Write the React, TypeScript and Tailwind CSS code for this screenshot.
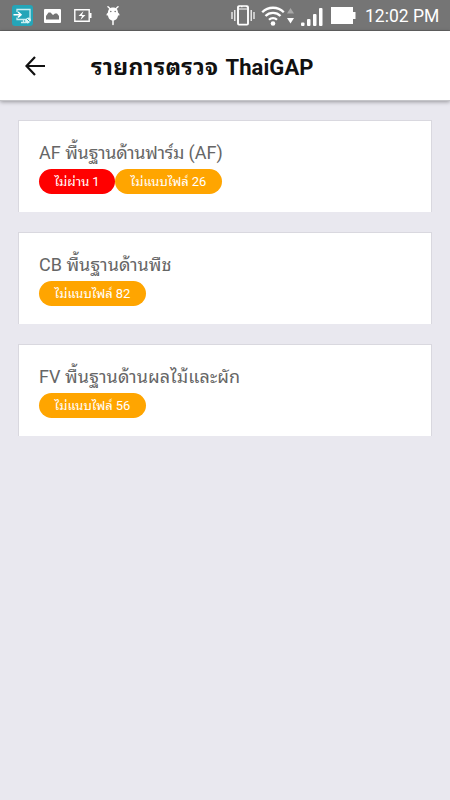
import React from 'react';

interface Badge {
  label: string;
  count: number;
  tone: 'fail' | 'missing';
}

interface ChecklistItem {
  code: string;
  title: string;
  tracking?: string;
  suffix?: string;
  badges: Badge[];
}

const items: ChecklistItem[] = [
  {
    code: 'AF',
    title: 'พื้นฐานด้านฟาร์ม',
    tracking: 'tracking-[-0.3px]',
    suffix: '(AF)',
    badges: [
      { label: 'ไม่ผ่าน', count: 1, tone: 'fail' },
      { label: 'ไม่แนบไฟล์', count: 26, tone: 'missing' }
    ]
  },
  {
    code: 'CB',
    title: 'พื้นฐานด้านพืช',
    badges: [{ label: 'ไม่แนบไฟล์', count: 82, tone: 'missing' }]
  },
  {
    code: 'FV',
    title: 'พื้นฐานด้านผลไม้และผัก',
    tracking: 'tracking-[0.1px]',
    badges: [{ label: 'ไม่แนบไฟล์', count: 56, tone: 'missing' }]
  }
];

const StatusBar: React.FC = () => (
  <div className="flex h-[31px] shrink-0 items-center border-b border-[#646464] bg-[#757575] text-white">
    {/* Notification icons */}
    <svg className="ml-3 h-[21px] w-[21px]" viewBox="0 0 21 21" fill="none">
      <rect width="21" height="21" rx="3" fill="#25a5b8" />
      <path d="M5 7V4.5h13v10H5v-2M9 17.5h5M11.5 14.5v3" stroke="#c9eef2" strokeWidth="1.3" />
      <path d="M1.5 9.7h7M6 7l3 2.7L6 12.4" stroke="#fff" strokeWidth="1.5" />
      <rect x="13" y="13" width="6" height="5" rx="2.5" transform="rotate(-40 16 15.5)" fill="#d8f4f6" />
      <path d="M15 14l2.5 2.5" stroke="#25a5b8" />
    </svg>
    <svg className="ml-[11px] mt-px h-[14px] w-[17px]" viewBox="0 0 17 14">
      <path
        fillRule="evenodd"
        fill="currentColor"
        d="M1 0h15a1 1 0 0 1 1 1v12a1 1 0 0 1-1 1H1a1 1 0 0 1-1-1V1a1 1 0 0 1 1-1ZM2 10.5h13V7l-2-2.5h-2L9 6 6.5 3.5h-2L2 7Z"
      />
    </svg>
    <svg className="ml-[13px] h-[13px] w-[18px]" viewBox="0 0 18 13" fill="none">
      <path d="M.8.8h14.4v11.4H.8z" stroke="currentColor" strokeWidth="1.4" />
      <path d="M15.5 4h2v5h-2z" fill="currentColor" />
      <path d="M9.5 2 4.5 7H8l-1.5 4 5-5H8z" fill="currentColor" />
    </svg>
    <svg className="ml-[14px] mt-[2px] h-[20px] w-[14px]" viewBox="0 0 14 20">
      <path d="M2 .8 4.5 3M12 .8 9.5 3M7 13v5.5" stroke="currentColor" strokeWidth="1.5" strokeLinecap="round" />
      <path
        d="M7 1.5C3.5 1.5 2 4 2 6.5L.6 8v1.5H2C2.2 12.5 4.5 14.5 7 14.5S11.8 12.5 12 9.5h1.400V8L12 6.500C12 4 10.500 1.500 7 1.500Z"
        fill="currentColor"
      />
      <circle cx="4.8" cy="5.5" r=".8" fill="#757575" />
      <circle cx="9.2" cy="5.5" r=".8" fill="#757575" />
    </svg>

    {/* System icons */}
    <svg className="ml-[111px] mt-px h-[21px] w-[24px]" viewBox="0 0 24 21" fill="none">
      <path d="M1 7v7M3.8 5v11M20.2 5v11M23 7v7" stroke="currentColor" strokeWidth="1.2" />
      <rect x="7" y="1.2" width="10" height="18.4" rx="1" stroke="currentColor" strokeWidth="1.9" />
      <path d="M8 4h8" stroke="currentColor" strokeWidth="1" />
      <path d="M8.5 2.3H10M11.5 2.3H15" stroke="#757575" strokeWidth="1" />
    </svg>
    <svg className="ml-[6px] mt-[2px] h-[20px] w-[24px]" viewBox="0 0 24 20" fill="none">
      <path
        d="M1.2 6.2a15.3 15.3 0 0 1 21.6 0M4.5 10a10.6 10.6 0 0 1 15 0M8 13.8a5.7 5.7 0 0 1 8 0"
        stroke="currentColor"
        strokeWidth="2.3"
      />
      <circle cx="12" cy="17.5" r="2.3" fill="currentColor" />
    </svg>
    <svg className="ml-[2px] mt-px h-[16px] w-[7px]" viewBox="0 0 7 16">
      <path d="M3.500 0 7 5.500H0z" fill="#a8a8a8" />
      <path d="M0 10h7l-3.500 5.500z" fill="currentColor" />
    </svg>
    <svg className="ml-[7px] mt-[3px] h-[18px] w-[22px]" viewBox="0 0 22 18" fill="currentColor">
      <rect y="14.5" width="3.5" height="3.5" rx="1" />
      <rect x="6" y="11" width="3.500" height="7" rx="1" />
      <rect x="12" y="6" width="3.500" height="12" rx="1" />
      <rect x="18" width="3.500" height="18" rx="1" />
    </svg>
    <svg className="ml-[8px] mt-px h-[17px] w-[25px]" viewBox="0 0 25 17" fill="currentColor">
      <path d="M0 0h22v5h2.500v7H22v5H0z" />
    </svg>
    <span className="ml-[9px] mt-[4px] whitespace-nowrap text-[17.5px] leading-none">12:02 PM</span>
  </div>
);

const Header: React.FC = () => (
  <header className="relative flex h-[70px] shrink-0 items-center border-b border-[#c4c4c8] bg-white shadow-[0_1px_4px_rgba(0,0,0,0.35)]">
    <svg className="ml-[25px] mt-px h-5 w-5" viewBox="0 0 20 20" fill="none" stroke="#111" strokeWidth="2.2">
      <path d="M20 10H1.5M10 1 1.5 10l8.500 9" />
    </svg>
    <h1 className="ml-[46px] mt-[3px] flex items-baseline gap-[7px] whitespace-nowrap text-[22px] font-bold leading-none text-[#111]">
      <span className="text-[23px] tracking-[0.3px]">รายการตรวจ</span>
      <span className="tracking-[0.1px]">ThaiGAP</span>
    </h1>
  </header>
);

const ChecklistCard: React.FC<{ item: ChecklistItem }> = ({ item }) => (
  <section className="h-[92px] border-x border-t border-[#d9d8df] bg-white pl-5 pt-[19px]">
    <h2 className="h-[29px] whitespace-nowrap text-[18px] leading-[26px] text-[#666]">
      {item.code} <span className={item.tracking}>{item.title}</span> {item.suffix}
    </h2>
    <div className="flex">
      {item.badges.map((badge) => (
        <span
          key={badge.label}
          className={`flex h-[25px] items-center justify-center gap-[3px] whitespace-nowrap rounded-full text-[13px] leading-none text-white ${
            badge.tone === 'fail' ? 'w-[76px] bg-[#ff0000]' : 'w-[107px] bg-[#ffa500]'
          }`}
        >
          <span>{badge.label}</span>
          <span>{badge.count}</span>
        </span>
      ))}
    </div>
  </section>
);

export default function App() {
  return (
    <div className="flex h-screen flex-col overflow-hidden bg-[#e9e8ef] font-[Roboto,'Noto_Sans_Thai_Looped',Loma,Garuda,Waree,'Noto_Sans_Thai',sans-serif]">
      <StatusBar />
      <Header />
      <main className="flex flex-col gap-5 px-[18px] pt-[19px]">
        {items.map((item) => (
          <ChecklistCard key={item.code} item={item} />
        ))}
      </main>
    </div>
  );
}
